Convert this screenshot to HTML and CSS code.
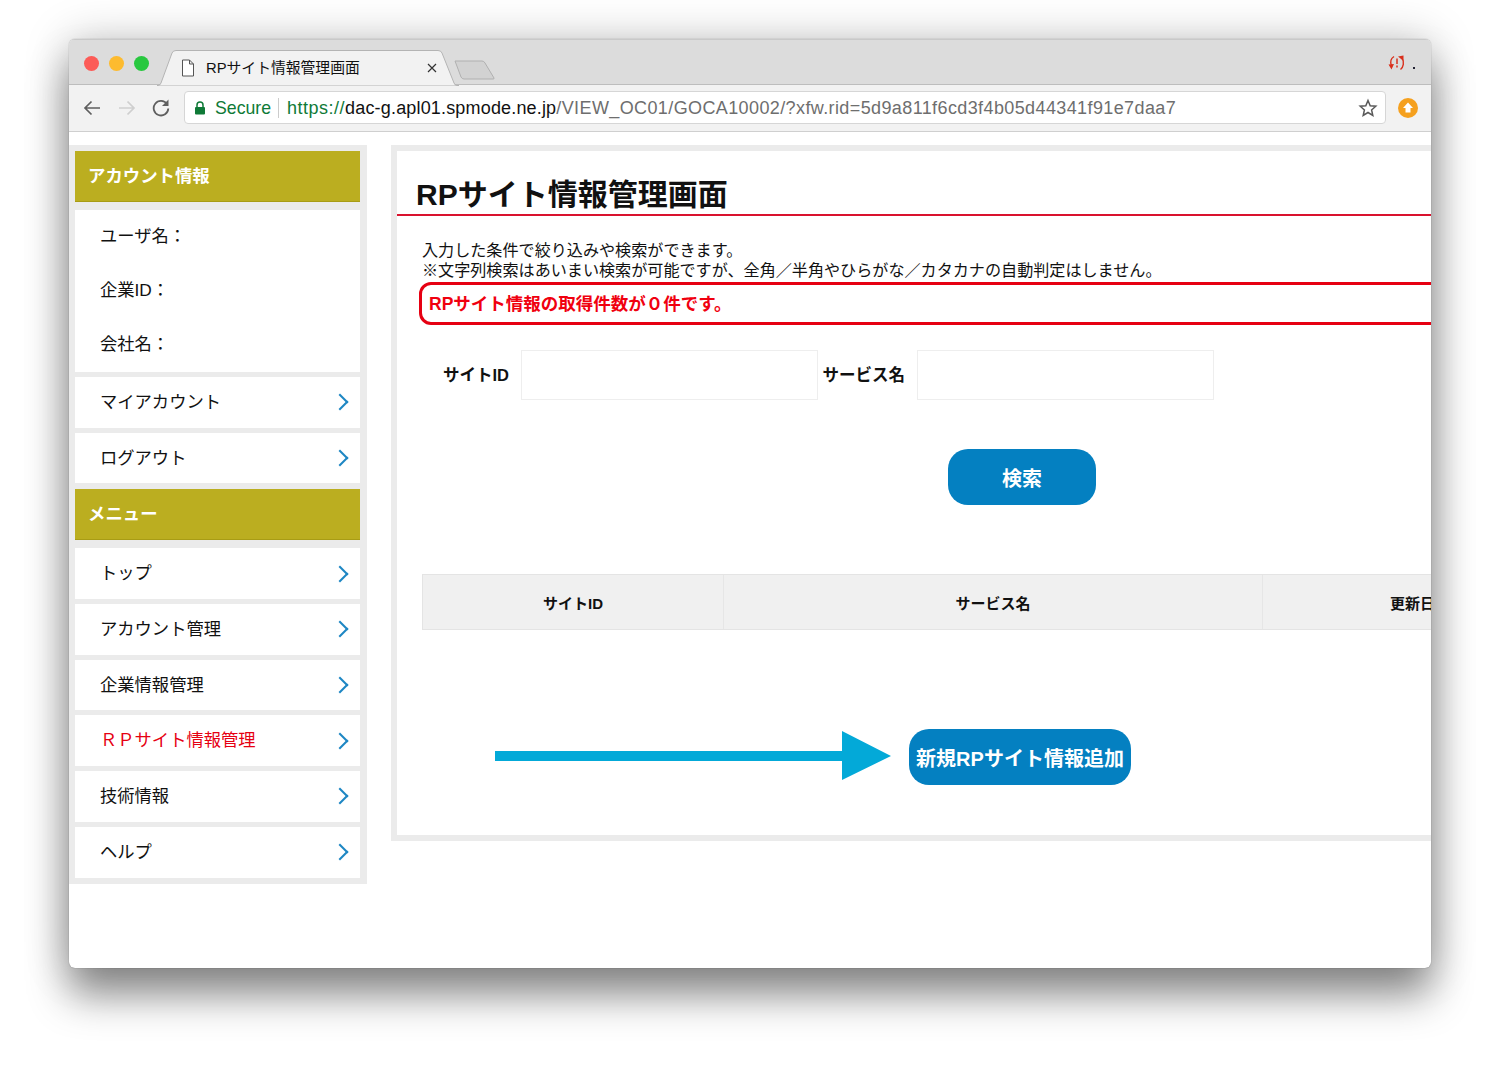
FILE: index.html
```html
<!DOCTYPE html>
<html lang="ja">
<head>
  <meta charset="UTF-8">
  <title>RPサイト情報管理画面</title>
  <link rel="stylesheet" href="styles.css">
</head>
<body>
  <div class="window">
    <div class="tabstrip">
      <div class="lights">
        <span class="light red"></span>
        <span class="light yellow"></span>
        <span class="light green"></span>
      </div>
      <div class="tab">
        <svg class="tab-shape" width="302" height="36" viewBox="0 0 302 36">
          <path d="M0 35.5 H1 Q3 35.5 4 33 L15 3 Q16 .5 19 .5 H281 Q284 .5 285 3 L297 33 Q298 35.5 300 35.5 H302 V36 H0Z" fill="#f2f2f2" stroke="#b4b4b4"/>
        </svg>
        <svg class="tab-doc" width="14" height="18" viewBox="0 0 14 18">
          <path d="M1.5 1 H8.5 L12.5 5 V17 H1.5Z M8.5 1 V5 H12.5" fill="#fff" stroke="#555" stroke-width="1"/>
        </svg>
        <span class="tab-title">RPサイト情報管理画面</span>
        <svg class="tab-close" width="10" height="10" viewBox="0 0 10 10">
          <path d="M1 1 L9 9 M9 1 L1 9" stroke="#333" stroke-width="1.2"/>
        </svg>
      </div>
      <svg class="newtab" width="42" height="20" viewBox="0 0 42 20">
        <path d="M1 1 H28 Q30 1 31 3 L40 18 Q40.5 19 39 19 H10 Q8 19 7 17 Z" fill="#d2d2d2" stroke="#b0b0b0"/>
      </svg>
      <div class="ext">
        <svg width="18" height="16" viewBox="0 0 18 16">
          <path d="M6 1.5 C3 3.5 2 7 3.5 10.5 M12.5 14.5 C15.5 12 16.5 7 14 3" fill="none" stroke="#d9301c" stroke-width="1.4"/>
          <path d="M0.5 9.5 L6 9 L3.5 14.5Z M10 1.5 L15.5 0.5 L15.5 6Z" fill="#d9301c"/>
          <path d="M9 3.5 V9 M9 10.5 V12.5" stroke="#d9301c" stroke-width="1.5"/>
        </svg>
        <span class="ext-dot"></span>
      </div>
    </div>

    <div class="toolbar">
      <svg class="nav" width="20" height="18" viewBox="0 0 20 18">
        <path d="M18 9 H3 M9.5 2.5 L3 9 L9.5 15.5" fill="none" stroke="#5f5f5f" stroke-width="1.7"/>
      </svg>
      <svg class="nav" width="20" height="18" viewBox="0 0 20 18">
        <path d="M2 9 H17 M10.5 2.5 L17 9 L10.5 15.5" fill="none" stroke="#cfcfcf" stroke-width="1.7"/>
      </svg>
      <svg class="nav" width="20" height="20" viewBox="0 0 20 20">
        <path d="M15 6 A7.3 7.3 0 1 0 16.3 10.5" fill="none" stroke="#5f5f5f" stroke-width="1.8"/>
        <path d="M16.5 1.5 V8 H10Z" fill="#5f5f5f"/>
      </svg>
      <div class="omnibox">
        <svg class="lock" width="12" height="14" viewBox="0 0 12 14">
          <path d="M3 6.5 V4 A3 3 0 0 1 9 4 V6.5" fill="none" stroke="#0f7a37" stroke-width="1.5"/>
          <rect x="1" y="6" width="10" height="7.5" rx="1" fill="#0f7a37"/>
        </svg>
        <span class="secure">Secure</span>
        <span class="url"><span class="scheme">https://</span><span class="host">dac-g.apl01.spmode.ne.jp</span><span class="path">/VIEW_OC01/GOCA10002/?xfw.rid=5d9a811f6cd3f4b05d44341f91e7daa7</span></span>
        <svg class="star" width="20" height="20" viewBox="0 0 20 20">
          <path d="M10 2.5 L12.2 7.7 L17.8 8.2 L13.6 11.9 L14.8 17.4 L10 14.5 L5.2 17.4 L6.4 11.9 L2.2 8.2 L7.8 7.7Z" fill="none" stroke="#5a5a5a" stroke-width="1.5"/>
        </svg>
      </div>
      <svg class="nav" width="20" height="20" viewBox="0 0 20 20">
        <circle cx="10" cy="10" r="10" fill="#f5a01e"/>
        <path d="M10 4.5 L15 10 H12.5 V14.5 H7.5 V10 H5Z" fill="#fff"/>
      </svg>
    </div>

    <div class="viewport">
      <aside class="sidebar">
        <div class="side-head">アカウント情報</div>
        <div class="side-info">
          <p>ユーザ名：</p>
          <p>企業ID：</p>
          <p>会社名：</p>
        </div>
        <a class="side-link">マイアカウント</a>
        <a class="side-link">ログアウト</a>
        <div class="side-head menu-head">メニュー</div>
        <a class="side-link">トップ</a>
        <a class="side-link">アカウント管理</a>
        <a class="side-link">企業情報管理</a>
        <a class="side-link active">ＲＰサイト情報管理</a>
        <a class="side-link">技術情報</a>
        <a class="side-link">ヘルプ</a>
      </aside>

      <main class="panel">
        <h1>RPサイト情報管理画面</h1>
        <div class="panel-body">
          <p class="intro">入力した条件で絞り込みや検索ができます。<br>※文字列検索はあいまい検索が可能ですが、全角／半角やひらがな／カタカナの自動判定はしません。</p>
          <div class="alert">RPサイト情報の取得件数が０件です。</div>
          <div class="search-row">
            <label class="id-label">サイトID</label>
            <input class="field" type="text">
            <label class="name-label">サービス名</label>
            <input class="field" type="text">
          </div>
          <div class="search-action">
            <button class="btn btn-search" type="button">検索</button>
          </div>
          <div class="result-head">
            <div class="col col-id">サイトID</div>
            <div class="col col-name">サービス名</div>
            <div class="col col-date">更新日時</div>
          </div>
          <div class="add-row">
            <svg class="arrow" width="396" height="50" viewBox="0 0 396 50">
              <path d="M0 20 H347 V0 L396 25 L347 49 V30 H0Z" fill="#03a9d8"/>
            </svg>
            <button class="btn btn-add" type="button">新規RPサイト情報追加</button>
          </div>
        </div>
      </main>
    </div>
  </div>
</body>
</html>
```

FILE: styles.css
```css
* {
  box-sizing: border-box;
}

body {
  margin: 0;
  height: 1067px;
  padding: 39px 69px 0;
  background: #fff;
  overflow: hidden;
  font-family: "Liberation Sans", "Noto Sans CJK JP", sans-serif;
  color: #111;
}

.window {
  width: 1362px;
  height: 929px;
  background: #fff;
  border-radius: 6px;
  overflow: hidden;
  display: flex;
  flex-direction: column;
  box-shadow: 0 0 1px rgba(0, 0, 0, 0.5), 0 28px 40px rgba(0, 0, 0, 0.42), 0 0 45px rgba(0, 0, 0, 0.22);
}

/* browser chrome */
.tabstrip {
  height: 46px;
  flex: none;
  position: relative;
  display: flex;
  align-items: flex-start;
  background: #dcdcdc;
  border-top: 1px solid #c9c9c9;
  border-bottom: 1px solid #bdbdbd;
}

.lights {
  display: flex;
  gap: 10px;
  padding: 16px 0 0 15px;
}

.light {
  width: 15px;
  height: 15px;
  border-radius: 50%;
}

.red { background: #fc5b57; }
.yellow { background: #fdbb2f; }
.green { background: #29c840; }

.tab {
  position: absolute;
  left: 88px;
  top: 10px;
  width: 302px;
  height: 36px;
  display: flex;
  align-items: center;
  padding: 0 0 0 24px;
}

.tab-shape {
  position: absolute;
  left: 0;
  top: 0;
}

.tab-doc, .tab-title, .tab-close {
  position: relative;
}

.tab-title {
  margin-left: 11px;
  padding-bottom: 4px;
  font-size: 14.8px;
  width: 221px;
  white-space: nowrap;
}

.newtab {
  position: absolute;
  left: 385px;
  top: 20px;
}

.ext {
  margin-left: auto;
  padding: 15px 16px 0 0;
  display: flex;
  align-items: flex-end;
  gap: 7px;
}

.ext-dot {
  width: 2px;
  height: 2px;
  margin-bottom: 2px;
  background: #223;
}

.toolbar {
  height: 47px;
  flex: none;
  display: flex;
  align-items: center;
  padding: 0 13px 1px 13px;
  gap: 15px;
  background: #f2f2f2;
  border-bottom: 1px solid #cfcfcf;
}

.nav {
  margin-top: 1px;
}

.omnibox {
  flex: 1;
  height: 33px;
  margin: 0 -3px 0 -3px;
  display: flex;
  align-items: center;
  padding: 1px 7px 0 9px;
  background: #fff;
  border: 1px solid #d6d6d6;
  border-radius: 4px;
  font-size: 18px;
  white-space: nowrap;
}

.lock {
  margin-right: 9px;
}

.secure {
  color: #0f7a37;
  font-size: 17.7px;
  padding-right: 7px;
  border-right: 1px solid #ccc;
  margin-right: 8px;
  line-height: 20px;
}

.url {
  flex: 1;
}

.scheme { color: #0f7a37; letter-spacing: 0.5px; }
.host { color: #111; letter-spacing: 0.17px; }
.path { color: #6e6e6e; letter-spacing: 0.39px; }

/* page */
.viewport {
  flex: 1;
  display: flex;
  align-items: flex-start;
  padding-top: 13px;
  overflow: hidden;
}

.sidebar {
  width: 298px;
  flex: none;
  padding: 6px 7px 6px 6px;
  background: #ebebeb;
  display: flex;
  flex-direction: column;
}

.side-head {
  height: 51px;
  display: flex;
  align-items: center;
  padding: 0 0 4px 13px;
  margin-bottom: 8px;
  background: #bbae20;
  border-bottom: 1px solid #a89c15;
  color: #fff;
  font-size: 17.4px;
  font-weight: bold;
}

.menu-head {
  margin-top: 1px;
}

.side-info {
  height: 162px;
  margin-bottom: 5px;
  padding: 0 25px;
  background: #fff;
}

.side-info p {
  margin: 0;
  height: 54px;
  padding-bottom: 6px;
  display: flex;
  align-items: center;
  font-size: 17.3px;
}

.side-link {
  height: 50.7px;
  margin-bottom: 5px;
  padding: 0 0 4px 25px;
  display: flex;
  align-items: center;
  position: relative;
  background: #fff;
  font-size: 17.3px;
}

.side-link::after {
  content: "";
  position: absolute;
  right: 14px;
  top: 50%;
  width: 10px;
  height: 10px;
  margin-top: -6px;
  border-top: 2.5px solid #1d86c3;
  border-right: 2.5px solid #1d86c3;
  transform: rotate(45deg);
}

.side-link:last-child {
  margin-bottom: 0;
}

.active {
  color: #e60012;
}

.panel {
  margin-left: 24px;
  width: 1100px;
  height: 696px;
  flex: none;
  border: 6px solid #ebebeb;
  background: #fff;
}

.panel h1 {
  margin: 0;
  padding: 24px 0 0 19px;
  height: 65px;
  font-size: 30px;
  line-height: 40px;
  font-weight: bold;
  border-bottom: 2px solid #d9122e;
}

.panel-body {
  padding: 25px 0 0 22px;
}

.intro {
  margin: 0 0 2px 3px;
  font-size: 16.1px;
  line-height: 19.5px;
}

.alert {
  height: 43px;
  width: 1060px;
  padding: 0 0 3px 7px;
  display: flex;
  align-items: center;
  border: 3px solid #e60012;
  border-radius: 12px;
  color: #f0000f;
  font-size: 17.5px;
  font-weight: bold;
}

.search-row {
  display: flex;
  align-items: center;
  margin-top: 25px;
  font-size: 16.5px;
  font-weight: bold;
}

.id-label, .name-label {
  text-align: right;
  margin-right: 12px;
  padding-bottom: 3px;
}

.id-label { width: 90px; }
.name-label { width: 87px; }

.field {
  width: 297px;
  height: 50px;
  border: 1px solid #eee;
  background: #fff;
}

.search-action {
  padding-left: 529px;
  margin-top: 49px;
}

.btn {
  border: 0;
  background: #0480c1;
  color: #fff;
  font-family: inherit;
  font-weight: bold;
  padding: 0;
}

.btn-search {
  width: 148px;
  height: 56px;
  border-radius: 20px;
  font-size: 20px;
}

.result-head {
  display: flex;
  width: 1140px;
  height: 56px;
  margin: 69px 0 0 3px;
  background: #f0f0f0;
  border: 1px solid #e4e4e4;
  border-right: 0;
  font-size: 15px;
  font-weight: bold;
}

.col {
  flex: none;
  display: flex;
  align-items: center;
  justify-content: center;
  border-right: 1px solid #e6e6e6;
}

.col-id { width: 301px; }
.col-name { width: 539px; }
.col-date { width: 300px; justify-content: flex-start; padding-left: 127px; white-space: nowrap; }

.add-row {
  display: flex;
  align-items: center;
  margin-top: 99px;
  padding-left: 76px;
}

.arrow {
  flex: none;
  margin-bottom: 2px;
}

.btn-add {
  width: 222px;
  height: 56px;
  margin-left: 18px;
  border-radius: 20px;
  font-size: 20px;
  white-space: nowrap;
}
```
